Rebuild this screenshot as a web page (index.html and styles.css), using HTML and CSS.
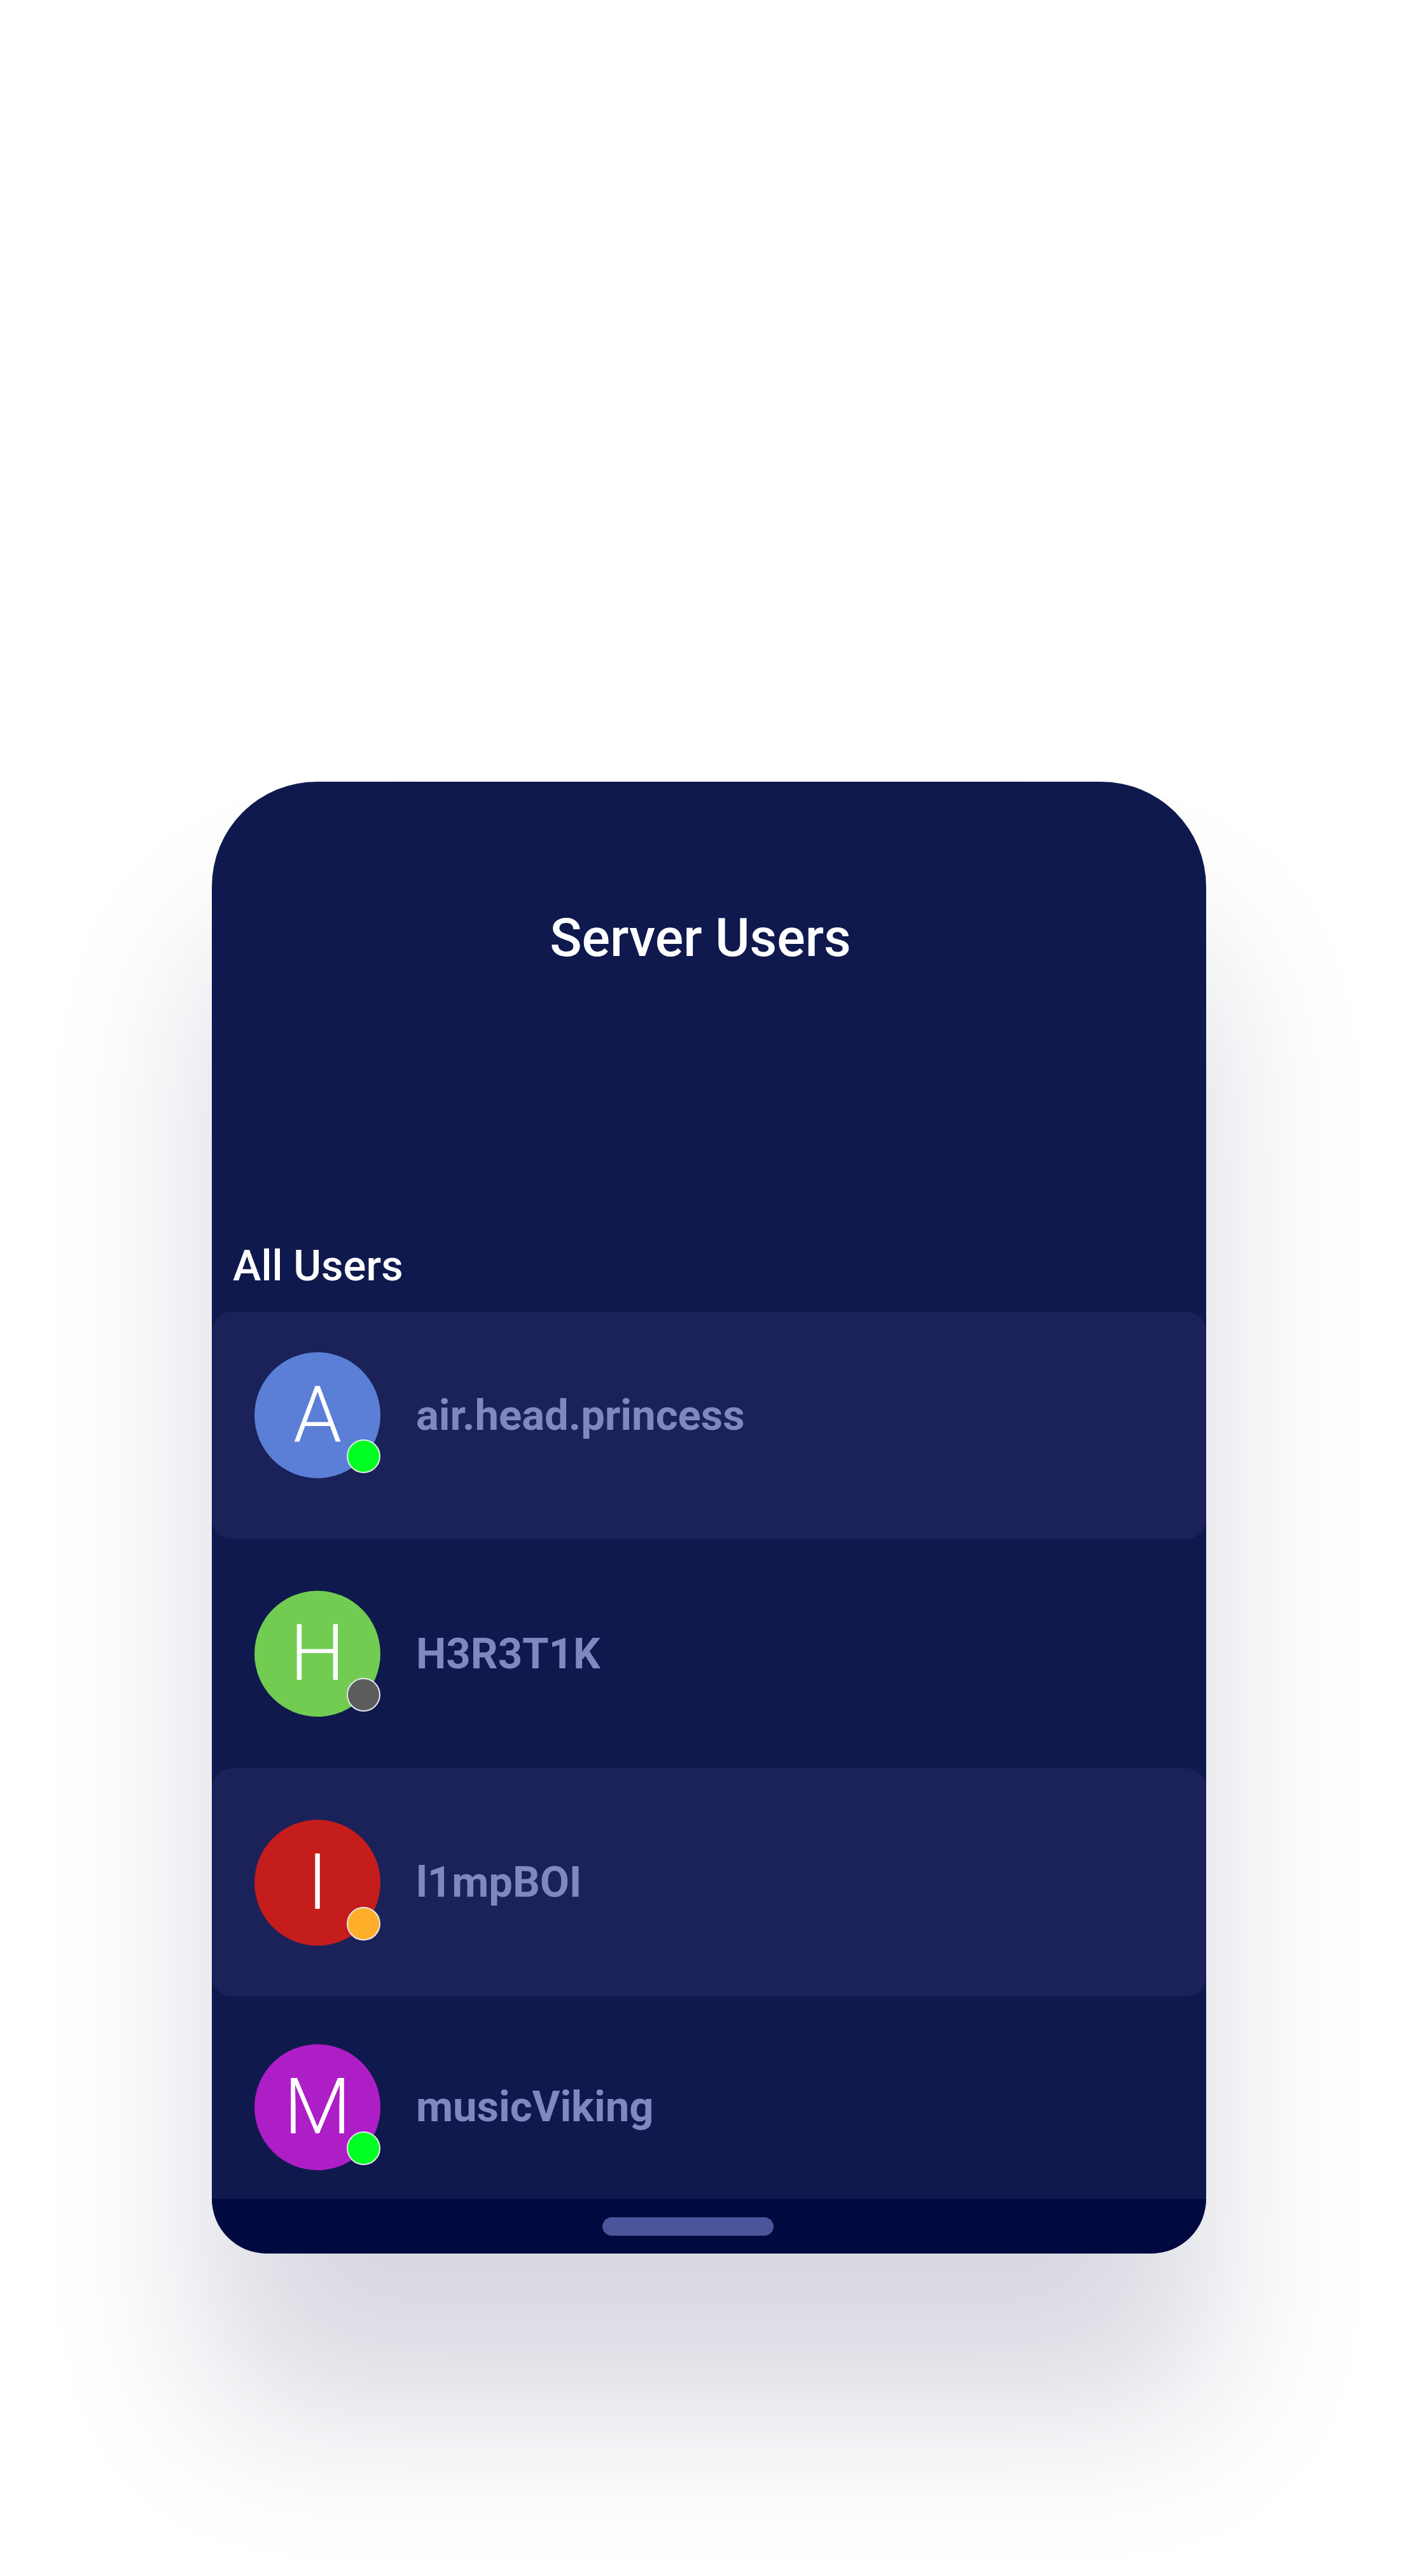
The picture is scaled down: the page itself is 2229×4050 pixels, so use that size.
FILE: index.html
```html
<!DOCTYPE html>
<html lang="en">
<head>
<meta charset="utf-8">
<title>Server Users</title>
<link rel="stylesheet" href="styles.css">
</head>
<body>
<div class="page">
  <div class="phone">
    <header class="header">
      <h1 class="title">Server Users</h1>
    </header>
    <main class="main">
      <h2 class="section-label">All Users</h2>
      <ul class="user-list">
        <li class="user-row row-first highlighted">
          <div class="avatar av-blue"><span class="initial">A</span><span class="status st-online"></span></div>
          <span class="username">air.head.princess</span>
        </li>
        <li class="user-row">
          <div class="avatar av-green"><span class="initial">H</span><span class="status st-offline"></span></div>
          <span class="username">H3R3T1K</span>
        </li>
        <li class="user-row highlighted">
          <div class="avatar av-red"><span class="initial">I</span><span class="status st-idle"></span></div>
          <span class="username">l1mpBOI</span>
        </li>
        <li class="user-row row-last">
          <div class="avatar av-purple"><span class="initial">M</span><span class="status st-online"></span></div>
          <span class="username">musicViking</span>
        </li>
      </ul>
    </main>
    <nav class="navbar"><span class="home-pill"></span></nav>
  </div>
</div>
</body>
</html>
```
FILE: styles.css
```css
html, body {
  margin: 0;
  padding: 0;
  background: #ffffff;
}

body {
  width: 2229px;
  height: 4050px;
  overflow: hidden;
  font-family: Roboto, "Noto Sans", "Liberation Sans", sans-serif;
}

.page {
  padding-top: 1229px;
}

.phone {
  width: 1563px;
  margin: 0 auto;
  background: #0f194d;
  border-radius: 165px 165px 90px 90px;
  box-shadow: 0 240px 300px rgba(15, 25, 77, 0.17);
  display: flex;
  flex-direction: column;
}

.header {
  height: 521px;
  box-sizing: border-box;
  padding-top: 197px;
  padding-right: 27px;
}

.title {
  margin: 0;
  font-size: 83px;
  line-height: 97px;
  font-weight: 500;
  color: #ffffff;
  text-align: center;
}

.main {
  padding-top: 200px;
}

.section-label {
  margin: 0 0 32px 0;
  padding-left: 33px;
  font-size: 67px;
  line-height: 80px;
  font-weight: 500;
  color: #ffffff;
}

.user-list {
  list-style: none;
  margin: 0;
  padding: 0;
  height: 1395px;
  overflow: hidden;
}

.user-row {
  display: flex;
  align-items: center;
  height: 359px;
  box-sizing: border-box;
  padding-left: 67px;
  gap: 56px;
  border-radius: 32px;
}

.user-row.row-first {
  height: 358px;
  padding-bottom: 32px;
}

.user-row:nth-child(2) {
  height: 360px;
}

.user-row.row-last {
  padding-bottom: 12px;
}

.highlighted {
  background: #1a2259;
}

.avatar {
  position: relative;
  width: 198px;
  height: 198px;
  border-radius: 50%;
  flex: none;
  display: flex;
  align-items: center;
  justify-content: center;
}

.av-blue { background: #5b7fd6; }
.av-green { background: #72cc52; }
.av-red { background: #c51c1c; }
.av-purple { background: #ae1ec6; }

.initial {
  font-size: 122px;
  line-height: 1;
  font-weight: 300;
  color: #ffffff;
}

.status {
  position: absolute;
  right: 0;
  bottom: 8px;
  width: 49px;
  height: 49px;
  border-radius: 50%;
  border: 2px solid #e8e8ee;
}

.st-online { background: #00ff22; }
.st-offline { background: #5c5c5c; }
.st-idle { background: #ffae2a; }

.username {
  font-size: 67px;
  font-weight: 700;
  color: #8088c0;
  line-height: 1.172;
}

.navbar {
  height: 86px;
  box-sizing: border-box;
  background: #000a40;
  border-radius: 0 0 90px 90px;
  padding: 29px 0 0 614px;
}

.home-pill {
  display: block;
  width: 269px;
  height: 29px;
  border-radius: 15px;
  background: #4b559b;
}
```
